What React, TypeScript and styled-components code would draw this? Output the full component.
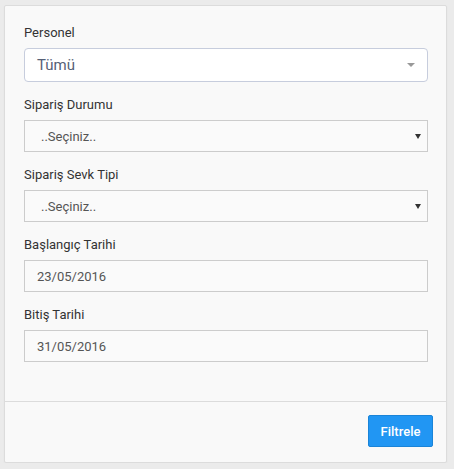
import React from "react";
import styled, { createGlobalStyle } from "styled-components";

const Global = createGlobalStyle`
  html, body { margin: 0; padding: 0; }
  body {
    background: #ebebeb;
    font-family: Roboto, "Liberation Sans", Arial, sans-serif;
    font-size: 13px;
    color: #333;
  }
`;

const Page = styled.div`
  padding: 5px 0 0 4px;
`;

const Panel = styled.div`
  box-sizing: border-box;
  width: 443px;
  height: 458px;
  background: #f9f9f9;
  border: 1px solid #dcdcdc;
  border-radius: 2px;
  box-shadow: 0 1px 2px rgba(0, 0, 0, 0.04);
  display: flex;
  flex-direction: column;
`;

const Body = styled.div`
  flex: 1;
  padding: 18px 18px 0 19px;
  display: flex;
  flex-direction: column;
  gap: 14px;
`;

const Group = styled.div`
  display: flex;
  flex-direction: column;
  gap: 6px;
`;

const Label = styled.div`
  line-height: 18px;
  height: 18px;
  color: #333;
`;

const Field = styled.div<{ $rounded?: boolean }>`
  box-sizing: border-box;
  position: relative;
  display: flex;
  align-items: center;
  width: 404px;
  height: ${(p) => (p.$rounded ? "34px" : "32px")};
  padding-left: 12px;
  background: ${(p) => (p.$rounded ? "#ffffff" : "#fafafa")};
  border: 1px solid ${(p) => (p.$rounded ? "#c7cddd" : "#cccccc")};
  border-radius: ${(p) => (p.$rounded ? "4px" : "0")};
  color: ${(p) => (p.$rounded ? "#566076" : "#555")};
  font-size: ${(p) => (p.$rounded ? "15px" : "13px")};
`;

const Placeholder = styled.span`
  padding-left: 4px;
`;

const LightArrow = styled.span`
  position: absolute;
  right: 12px;
  top: 50%;
  margin-top: -2px;
  width: 0;
  height: 0;
  border-style: solid;
  border-width: 4px 4px 0 4px;
  border-color: #999 transparent transparent transparent;
`;

const DarkArrow = styled.span`
  position: absolute;
  right: 6px;
  top: 50%;
  margin-top: -2px;
  width: 0;
  height: 0;
  border-style: solid;
  border-width: 5px 3.5px 0 3.5px;
  border-color: #333 transparent transparent transparent;
`;

const Footer = styled.div`
  border-top: 1px solid #dcdcdc;
  display: flex;
  justify-content: flex-end;
  padding: 13px 13px 15px 0;
`;

const Button = styled.button`
  box-sizing: border-box;
  width: 65px;
  height: 32px;
  background: #2196f3;
  border: 1px solid #1a84d8;
  border-radius: 2px;
  color: #fff;
  font-family: Roboto, "Liberation Sans", Arial, sans-serif;
  font-size: 13px;
  font-weight: 500;
  padding: 0;
  cursor: pointer;
`;

export default function App() {
  return (
    <>
      <Global />
      <Page>
        <Panel>
          <Body>
            <Group>
              <Label>Personel</Label>
              <Field $rounded>
                Tümü
                <LightArrow />
              </Field>
            </Group>
            <Group>
              <Label>Sipariş Durumu</Label>
              <Field>
                <Placeholder>..Seçiniz..</Placeholder>
                <DarkArrow />
              </Field>
            </Group>
            <Group>
              <Label>Sipariş Sevk Tipi</Label>
              <Field>
                <Placeholder>..Seçiniz..</Placeholder>
                <DarkArrow />
              </Field>
            </Group>
            <Group>
              <Label>Başlangıç Tarihi</Label>
              <Field>23/05/2016</Field>
            </Group>
            <Group>
              <Label>Bitiş Tarihi</Label>
              <Field>31/05/2016</Field>
            </Group>
          </Body>
          <Footer>
            <Button>Filtrele</Button>
          </Footer>
        </Panel>
      </Page>
    </>
  );
}
